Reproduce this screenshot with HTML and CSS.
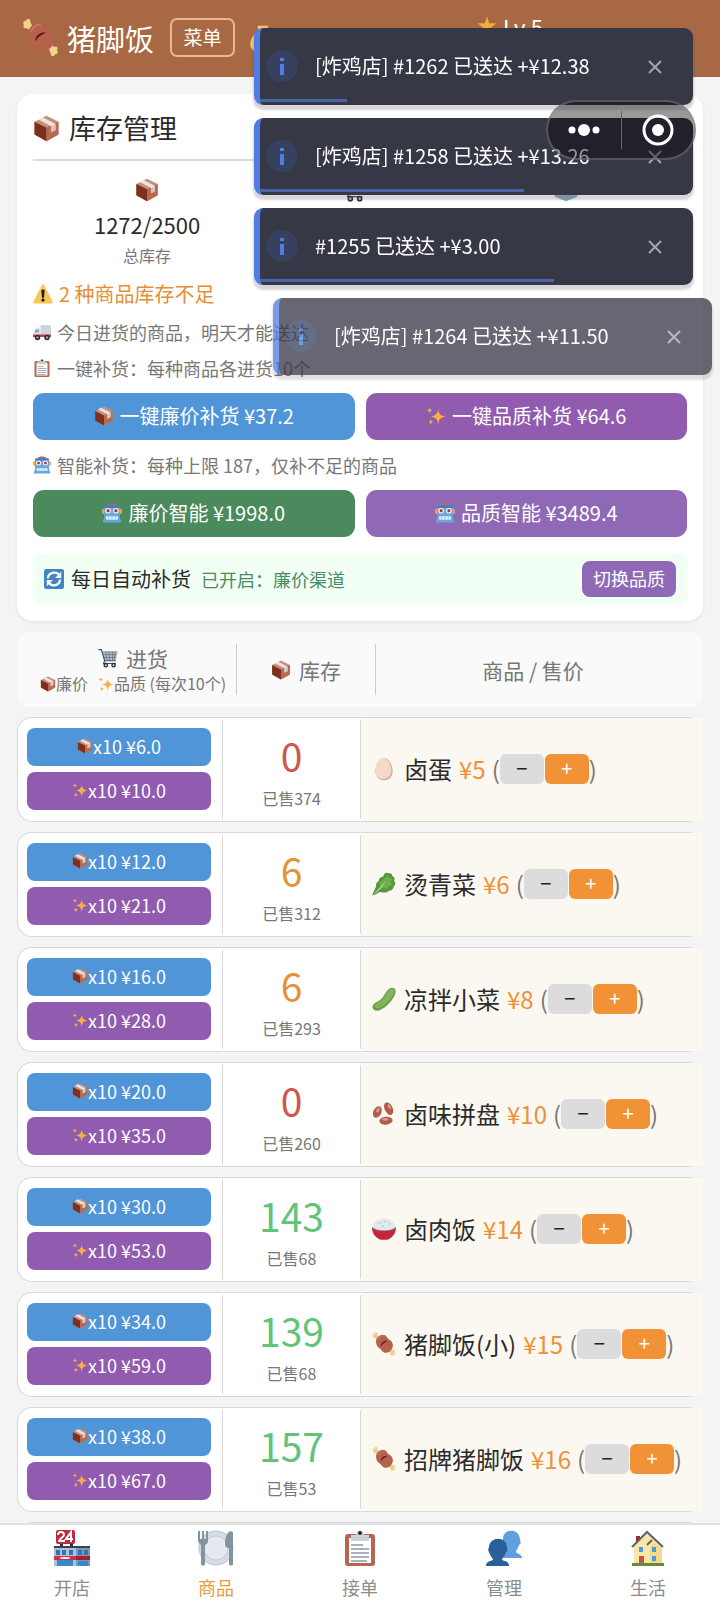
FILE: index.html
```html
<!DOCTYPE html>
<html lang="zh-CN">
<head>
    <meta charset="utf-8">
    <meta name="viewport" content="width=device-width, initial-scale=1">
    <title>猪脚饭</title>
    <link rel="stylesheet" href="styles.css">
</head>
<body>
    <!-- icon sprite -->
    <svg class="sprite" aria-hidden="true">
        <symbol id="meat" viewBox="0 0 36 36">
            <path d="M2 6c-2-2 0-5 2-4 0-3 4-3 4 0l1 3 4 5-4 3-4-4-2 0c-2 0-2-2-1-3z" fill="#f3d18b"/>
            <path d="M34 30c2 2 0 5-2 4 0 3-4 3-4 0l-1-3-4-5 4-3 4 4 2 0c2 0 2 2 1 3z" fill="#f3d18b"/>
            <path d="M6 14c0-5 4-9 10-10 4 0 6 2 7 5 1 2 4 2 6 5 3 4 3 8 1 11-2 4-6 7-11 6-4-1-4-4-7-6-4-2-6-6-6-11z" fill="#b5614c"/>
            <path d="M10 8c3-3 7-4 10-2-4 0-7 1-9 4-1 3-3 3-3 2z" fill="#c87964"/>
            <path d="M13 20c1-4 5-7 10-7-1 2-5 2-8 6-1 2-2 3-2 1z" fill="#5b120f"/>
        </symbol>
        <symbol id="box" viewBox="0 0 36 36">
            <path d="M18 1l16 8v17l-16 9L2 26V9z" fill="#c98f78"/>
            <path d="M2 9l16 8v18L2 26z" fill="#7e301f"/>
            <path d="M18 17l16-8v17l-16 9z" fill="#b9694f"/>
            <path d="M7 6l6-3 17 9v8l-6 3v-8z" fill="#e8e4e6"/>
            <path d="M24 15l6-3v8l-6 3z" fill="#cfc6c6"/>
        </symbol>
        <symbol id="sparkle" viewBox="0 0 36 36">
            <path d="M22 5c1 9 3 12 13 14-10 2-12 5-13 15-1-10-4-13-13-15 9-2 12-5 13-14z" fill="#fbb03c"/>
            <path d="M7 2c0 4 1 5 5 6-4 0-5 2-5 6-1-4-2-6-6-6 4-1 5-2 6-6zM9 23c0 4 1 5 5 6-4 0-5 2-5 6-1-4-2-6-5-6 3-1 4-2 5-6z" fill="#fbb03c"/>
        </symbol>
        <symbol id="cart" viewBox="0 0 36 36">
            <path d="M8 7h27l-3 15H12z" fill="#b4c4d2"/>
            <path d="M8 7h27M9 12h25M10 17h23M14 7l2 15M20 7l1 15M26 7v15M31 7l-2 15" stroke="#66757f" stroke-width="1.500" fill="none"/>
            <path d="M1 3h5l6 20h20M12 23l-2 5h22" stroke="#414a54" stroke-width="2" fill="none"/>
            <circle cx="14" cy="31" r="3" fill="#ddd" stroke="#292f33" stroke-width="2.500"/>
            <circle cx="28" cy="31" r="3" fill="#ddd" stroke="#292f33" stroke-width="2.500"/>
        </symbol>
        <symbol id="ice" viewBox="0 0 36 36">
            <path d="M18 1l17 8v19l-17 7-17-7V9z" fill="#8ba9ba"/>
            <path d="M1 9l17 8 17-8-17-8z" fill="#bddcea"/>
        </symbol>
        <symbol id="warn" viewBox="0 0 36 36">
            <path d="M16 2c1-2 3-2 4 0l15 29c1 2 0 4-2 4H3c-2 0-3-2-2-4z" fill="#f8ca55"/>
            <path d="M15 12c0-3 6-3 6 0l-1 11c0 3-4 3-4 0z" fill="#231f20"/>
            <circle cx="18" cy="29" r="3" fill="#231f20"/>
        </symbol>
        <symbol id="truck" viewBox="0 0 36 36">
            <path d="M15 7c0-2 1-3 3-3h15c2 0 3 1 3 3v19H15z" fill="#ced6dc"/>
            <path d="M1 19l4-8c1-1 2-2 4-2h6v17H1z" fill="#e8e8df"/>
            <path d="M5 13h7v6H3z" fill="#6faee0"/>
            <path d="M0 23h36v5H0z" fill="#d53546"/>
            <circle cx="9" cy="29" r="4" fill="#98a4ae" stroke="#292f33" stroke-width="3"/>
            <circle cx="28" cy="29" r="4" fill="#98a4ae" stroke="#292f33" stroke-width="3"/>
        </symbol>
        <symbol id="clipboard" viewBox="0 0 36 36">
            <rect x="3" y="4" width="30" height="32" rx="3" fill="#b96450"/>
            <path d="M7 8h22v25H7z" fill="#fff"/>
            <path d="M9 15h12M9 19h18M9 23h18M9 27h18M9 31h16" stroke="#8899a6" stroke-width="1.500"/>
            <path d="M9 5h5c0-6 8-6 8 0h5v6H9z" fill="#ccd2d6"/>
            <circle cx="18" cy="3" r="2" fill="#292f33"/>
        </symbol>
        <symbol id="robot" viewBox="0 0 36 36">
            <path d="M9 4c2-4 16-4 18 0z" fill="#e05a4c"/>
            <rect x="0" y="10" width="36" height="10" rx="4" fill="#f5a43f"/>
            <path d="M4 6c0-2 28-2 28 0v20l3 9H1l3-9z" fill="#67a7dc"/>
            <path d="M4 6c0-3 28-3 28 0v3H4z" fill="#3d82bf"/>
            <circle cx="11" cy="14" r="5" fill="#fff"/><circle cx="25" cy="14" r="5" fill="#fff"/>
            <circle cx="11" cy="14" r="3" fill="#b8304a"/><circle cx="25" cy="14" r="3" fill="#b8304a"/>
            <rect x="7" y="24" width="22" height="6" rx="2" fill="#e4edf5"/>
            <path d="M12 24v6M18 24v6M24 24v6" stroke="#67a7dc"/>
        </symbol>
        <symbol id="refresh" viewBox="0 0 36 36">
            <rect width="36" height="36" rx="4" fill="#4384c4"/>
            <path d="M7 17c1-11 15-14 21-5M29 19c-1 11-15 14-21 5" fill="none" stroke="#fff" stroke-width="4"/>
            <path d="M31 5v11H20zM5 31V20h11z" fill="#fff"/>
        </symbol>
        <symbol id="egg" viewBox="0 0 36 36">
            <path d="M18 1c7 0 13 12 13 20 0 9-6 14-13 14S5 30 5 21C5 13 11 1 18 1z" fill="#dba995"/>
            <path d="M17 1c6 0 12 11 12 19 0 8-5 13-12 13S5 29 5 20C5 12 11 1 17 1z" fill="#f4d9cb"/>
        </symbol>
        <symbol id="leaf" viewBox="0 0 36 36">
            <path d="M1 35c-1-3 4-8 5-14 0-4 1-6 4-7 0-5 4-7 7-7 0-5 5-7 8-5 3-1 6 1 5 4 4 1 5 4 3 7 3 3 2 7-1 9 0 5-4 6-7 6-3 4-8 3-12 2-4 0-8 5-12 5z" fill="#57963b"/>
            <path d="M12 16c2-1 4-6 8-7l4-4 2 4 5 2-3 4 3 4-6 2-2 4-6-1-5 2z" fill="#6fae4a"/>
            <path d="M2 34c6-7 10-12 20-21-7 9-11 15-20 21z" fill="#b4d88a"/>
        </symbol>
        <symbol id="cucumber" viewBox="0 0 36 36">
            <path d="M24 4c4-4 9-4 11 0 2 6-5 17-13 24C15 34 7 38 3 34c-5-5-1-9 5-12C17 18 19 9 24 4z" fill="#6a9d49"/>
            <path d="M25 5c3-3 7-3 8 0 2 5-6 15-13 21-5 4-12 8-15 5-3-3 0-5 5-8C19 19 20 10 25 5z" fill="#83b45c"/>
        </symbol>
        <symbol id="beans" viewBox="0 0 36 36">
            <g fill="#b25b49">
                <ellipse cx="8" cy="15" rx="6" ry="9" transform="rotate(25 8 15)"/>
                <ellipse cx="25" cy="10" rx="6" ry="10" transform="rotate(-25 25 10)"/>
                <ellipse cx="21" cy="28" rx="10" ry="6" transform="rotate(-5 21 28)"/>
            </g>
            <g fill="#dd9a88">
                <ellipse cx="9" cy="12" rx="2" ry="4" transform="rotate(30 9 12)"/>
                <ellipse cx="26" cy="7" rx="2" ry="4" transform="rotate(-25 26 7)"/>
                <ellipse cx="20" cy="26" rx="5" ry="2"/>
            </g>
        </symbol>
        <symbol id="rice" viewBox="0 0 36 36">
            <path d="M0 16h36c0 7-4 13-9 16-1 3-17 3-18 0C4 29 0 23 0 16z" fill="#c3263e"/>
            <ellipse cx="18" cy="16" rx="17" ry="5" fill="#8a8f96"/>
            <path d="M1 14C4 5 12 3 18 2c8 0 14 5 17 12-1 8-33 8-34 0z" fill="#e3e8eb"/>
            <path d="M10 9l3 1M18 6l3 2M25 11l3-1M15 14l3-1" stroke="#c2ccd2" stroke-width="2"/>
        </symbol>
        <symbol id="store" viewBox="0 0 36 36">
            <path d="M6 12h3v6H6zM16 12h3v6h-3z" fill="#292f33"/>
            <rect x="2" y="0" width="19" height="14" rx="2" fill="#c0283c"/>
            <path d="M4 5c0-4 6-4 6 0 0 2-5 4-5 6h6M17 12V2l-5 7h7" fill="none" stroke="#fff" stroke-width="2"/>
            <path d="M0 17h22v19H0z" fill="#a9c3dd"/>
            <path d="M22 17h14v19H22z" fill="#8196ad"/>
            <path d="M0 16h36v2H0z" fill="#39424e"/>
            <path d="M2 20h4v5H2zM8 20h4v5H8zM15 20h4v5h-4zM24 20h4v5h-4zM30 20h4v5h-4z" fill="#3273b5"/>
            <path d="M0 26h22v4H0z" fill="#d22f43"/><path d="M22 26h14v4H22z" fill="#a02035"/>
            <path d="M3 30h16v6H3zM24 31h10v5H24z" fill="#3b88c8"/>
            <ellipse cx="11" cy="28" rx="5" ry="1" fill="#fff"/>
        </symbol>
        <symbol id="plate" viewBox="0 0 36 36">
            <circle cx="18" cy="18" r="17" fill="#d5dce4" stroke="#bcc6d0"/>
            <circle cx="18" cy="18" r="12" fill="#e5eaf0" stroke="#c3ccd6"/>
            <path d="M0 1v9c0 3 2 4 3 5v19c0 2 4 2 4 0V15c2-1 3-2 3-5V1H8v8H6V1H4v8H2V1z" fill="#8293a2"/>
            <path d="M35 2c-4-3-8 3-8 11 0 3 1 5 4 5v16c0 2 4 2 4 0z" fill="#8293a2"/>
        </symbol>
        <symbol id="people" viewBox="0 0 36 36">
            <path d="M17 8c1-10 17-10 17 2 1 2 1 4-1 5-1 4-3 5-3 7 1 2 6 2 6 6H16z" fill="#5f9fe2"/>
            <path d="M3 17c1-11 18-11 18 1 1 2 0 4-1 4-1 4-4 6-4 8 2 1 7 1 7 6H0c0-5 5-5 7-6 0-2-3-4-4-8-1-1-1-3 0-5z" fill="#2a6099"/>
        </symbol>
        <symbol id="house" viewBox="0 0 36 36">
            <path d="M6 6h4v11H6z" fill="#9b2335"/>
            <path d="M4 16L17 3l15 13v17H4z" fill="#fbe5a9"/>
            <path d="M20 17l4-4 8 5v15H20z" fill="#f4d98a"/>
            <path d="M2 17L17 2l16 15M17 15l5-5" fill="none" stroke="#5f6467" stroke-width="2"/>
            <path d="M9 17h4v5H9zM22 17h4v5h-4zM22 26h4v5h-4z" fill="#4e9bdc"/>
            <path d="M9 26h5v8H9z" fill="#b75c48"/>
            <path d="M2 33h32v3H2z" fill="#638b39"/>
        </symbol>
        <symbol id="star" viewBox="0 0 36 36">
            <path d="M18 1l4 12h13l-10 8 4 13-11-8-11 8 4-13L1 13h13z" fill="#f2ab3d"/>
        </symbol>
        <symbol id="money" viewBox="0 0 36 36">
            <path d="M12 1h15l-4 8c10 6 14 25 4 27H9C-3 33 1 15 13 9z" fill="#f3c66e"/>
        </symbol>
    </svg>

    <header class="topbar">
        <svg class="logo"><use href="#meat"/></svg>
        <h1>猪脚饭</h1>
        <button class="menu-btn">菜单</button>
        <svg class="money"><use href="#money"/></svg>
        <div class="level"><svg class="icon"><use href="#star"/></svg>Lv.5</div>
    </header>

    <main>
        <section class="card">
            <h2><svg class="icon"><use href="#box"/></svg>库存管理</h2>
            <div class="stats">
                <div class="stat">
                    <svg class="icon"><use href="#box"/></svg>
                    <b>1272/2500</b>
                    <span>总库存</span>
                </div>
                <div class="stat stat-narrow"><svg class="icon"><use href="#cart"/></svg></div>
                <div class="stat stat-wide"><svg class="icon"><use href="#ice"/></svg></div>
            </div>
            <p class="low"><svg class="icon"><use href="#warn"/></svg>2 种商品库存不足</p>
            <p class="tip"><svg class="icon"><use href="#truck"/></svg>今日进货的商品，明天才能送达</p>
            <p class="tip"><svg class="icon"><use href="#clipboard"/></svg>一键补货：每种商品各进货10个</p>
            <div class="btn-row">
                <button class="btn blue"><svg class="icon"><use href="#box"/></svg>一键廉价补货 ¥37.2</button>
                <button class="btn purple"><svg class="icon"><use href="#sparkle"/></svg>一键品质补货 ¥64.6</button>
            </div>
            <p class="tip tip-smart"><svg class="icon"><use href="#robot"/></svg>智能补货：每种上限 187，仅补不足的商品</p>
            <div class="btn-row">
                <button class="btn green"><svg class="icon"><use href="#robot"/></svg>廉价智能 ¥1998.0</button>
                <button class="btn violet"><svg class="icon"><use href="#robot"/></svg>品质智能 ¥3489.4</button>
            </div>
            <div class="auto">
                <svg class="icon"><use href="#refresh"/></svg>
                <span class="auto-name">每日自动补货</span>
                <span class="auto-state">已开启：廉价渠道</span>
                <button class="switch-btn">切换品质</button>
            </div>
        </section>

        <table class="goods">
            <thead>
                <tr>
                    <th>
                        <div class="th-main"><svg class="icon"><use href="#cart"/></svg>进货</div>
                        <div class="th-sub"><svg class="icon"><use href="#box"/></svg>廉价 <svg class="icon second"><use href="#sparkle"/></svg>品质 (每次10个)</div>
                    </th>
                    <th><div class="th-main"><svg class="icon"><use href="#box"/></svg>库存</div></th>
                    <th><div class="th-main">商品 / 售价</div></th>
                </tr>
            </thead>
            <tbody id="goods"></tbody>
        </table>
    </main>

    <nav class="tabs">
        <a href="#shop"><svg><use href="#store"/></svg>开店</a>
        <a href="#goods" class="active"><svg><use href="#plate"/></svg>商品</a>
        <a href="#orders"><svg><use href="#clipboard"/></svg>接单</a>
        <a href="#manage"><svg><use href="#people"/></svg>管理</a>
        <a href="#life"><svg><use href="#house"/></svg>生活</a>
    </nav>

    <div class="toasts" id="toasts"></div>

    <!-- mini program capsule -->
    <div class="capsule">
        <button aria-label="更多"><svg viewBox="0 0 36 36"><circle cx="6" cy="18" r="3.500"/><circle cx="18" cy="18" r="6"/><circle cx="30" cy="18" r="3.500"/></svg></button>
        <button aria-label="关闭"><svg viewBox="0 0 36 36"><circle cx="18" cy="18" r="14" fill="none" stroke="#fff" stroke-width="3"/><circle cx="18" cy="18" r="6"/></svg></button>
    </div>

    <script>
        const goods = [
            { icon: 'egg', name: '卤蛋', price: 5, cheap: '6.0', fine: '10.0', stock: 0, sold: 374 },
            { icon: 'leaf', name: '烫青菜', price: 6, cheap: '12.0', fine: '21.0', stock: 6, sold: 312 },
            { icon: 'cucumber', name: '凉拌小菜', price: 8, cheap: '16.0', fine: '28.0', stock: 6, sold: 293 },
            { icon: 'beans', name: '卤味拼盘', price: 10, cheap: '20.0', fine: '35.0', stock: 0, sold: 260 },
            { icon: 'rice', name: '卤肉饭', price: 14, cheap: '30.0', fine: '53.0', stock: 143, sold: 68 },
            { icon: 'meat', name: '猪脚饭(小)', price: 15, cheap: '34.0', fine: '59.0', stock: 139, sold: 68 },
            { icon: 'meat', name: '招牌猪脚饭', price: 16, cheap: '38.0', fine: '67.0', stock: 157, sold: 53 }
        ];
        const toasts = [
            { text: '[炸鸡店] #1262 已送达 +¥12.38', left: 20 },
            { text: '[炸鸡店] #1258 已送达 +¥13.26', left: 61 },
            { text: '#1255 已送达 +¥3.00', left: 68 },
            { text: '[炸鸡店] #1264 已送达 +¥11.50', left: 0, entering: true }
        ];

        function icon(id) {
            return `<svg class="icon"><use href="#${id}"/></svg>`;
        }

        function level(stock) {
            if (stock === 0) return 'empty';
            return stock < 10 ? 'few' : 'enough';
        }

        document.querySelector('#goods').innerHTML = goods.map(g => `
            <tr>
                <td class="buy">
                    <button class="blue">${icon('box')}x10 ¥${g.cheap}</button>
                    <button class="purple">${icon('sparkle')}x10 ¥${g.fine}</button>
                </td>
                <td class="stock"><b class="${level(g.stock)}">${g.stock}</b><span>已售${g.sold}</span></td>
                <td class="item">${icon(g.icon)}<span class="name">${g.name}</span><span class="price">¥${g.price}</span><span class="paren">(</span><button class="minus" aria-label="降价">−</button><button class="plus" aria-label="涨价">+</button><span class="paren">)</span></td>
            </tr>`).join('') + '<tr class="next-row"><td></td><td></td><td></td></tr>';

        document.querySelector('#toasts').innerHTML = toasts.map(t => `
            <div class="toast${t.entering ? ' entering' : ''}">
                <svg class="info" viewBox="0 0 32 32"><circle cx="16" cy="16" r="16"/><path d="M16 14v11M16 8v3"/></svg>
                <span>${t.text}</span>
                <button aria-label="关闭"><svg viewBox="0 0 14 14"><path d="M1 1l12 12M13 1L1 13"/></svg></button>
                <div class="progress" style="width: ${t.left}%"></div>
            </div>`).join('');
    </script>
</body>
</html>
```
FILE: styles.css
```css
* {
    box-sizing: border-box;
}
body {
    margin: 0;
    height: 100vh;
    display: flex;
    flex-direction: column;
    overflow: hidden;
    background: #f4f4f4;
    color: #2b2b2b;
    font-family: "Noto Sans CJK SC", sans-serif;
    font-weight: 400;
    font-size: 20px;
    line-height: 24px;
}
button {
    border: none;
    padding: 0 0 2px;
    font: inherit;
    color: #fff;
    cursor: pointer;
}
h1, h2, p {
    margin: 0;
    font-weight: inherit;
}
b, th {
    font-weight: inherit;
}
.sprite {
    position: absolute;
    width: 0;
    height: 0;
}
.icon {
    width: 20px;
    height: 20px;
    flex: none;
}
.blue { background: #5095d7; }
.purple { background: #915bb0; }
.green { background: #4a8a5c; }
.violet { background: #8f69b6; }

/* header */
.topbar {
    flex: none;
    display: flex;
    align-items: center;
    height: 77px;
    padding: 0 177px 2px 22px;
    background: #a76843;
    color: #fff;
}
.logo {
    width: 37px;
    height: 37px;
    margin-right: 8px;
}
h1 {
    font-size: 29px;
    line-height: 36px;
}
.menu-btn {
    width: 65px;
    height: 39px;
    margin: 0 14px 0 16px;
    border: 2px solid #ecb694;
    border-radius: 7px;
    background: none;
    font-size: 19px;
}
.money {
    width: 26px;
    height: 30px;
}
.level {
    display: flex;
    align-items: center;
    gap: 6px;
    align-self: flex-start;
    margin: 14px 0 0 auto;
    font-size: 22px;
}

/* stock card */
main {
    flex: 1;
    min-height: 0;
    overflow: hidden;
    padding: 17px 17px 0;
}
.card {
    padding: 16px;
    border-radius: 16px;
    background: #fff;
    box-shadow: 0 2px 4px rgba(0, 0, 0, 0.06);
}
h2 {
    display: flex;
    align-items: center;
    gap: 9px;
    padding-bottom: 13px;
    border-bottom: 2px solid #ddd;
    font-size: 27px;
    line-height: 36px;
}
h2 .icon {
    width: 27px;
    height: 27px;
}
.stats {
    display: flex;
    justify-content: space-around;
    padding: 17px 0 7px;
}
.stat {
    display: flex;
    flex-direction: column;
    align-items: center;
}
.stat .icon {
    width: 24px;
    height: 24px;
}
.stat b {
    margin: 10px 0 7px;
    font-size: 22px;
}
.stat span {
    color: #777;
    font-size: 16px;
}
.stat-narrow { width: 62px; }
.stat-wide { width: 120px; }
.low, .tip {
    display: flex;
    align-items: center;
    gap: 6px;
}
.low {
    height: 40px;
    color: #e48f33;
}
.tip {
    height: 36px;
    color: #777;
    font-size: 18px;
}
.tip .icon {
    width: 18px;
    height: 18px;
}
.tip-smart {
    height: 50px;
}
.btn-row {
    display: grid;
    grid-template-columns: 1fr 1fr;
    gap: 11px;
}
.tip + .btn-row {
    margin-top: 7px;
}
.tip-smart + .btn-row {
    margin-top: 0;
}
.btn {
    display: flex;
    align-items: center;
    justify-content: center;
    gap: 6px;
    height: 47px;
    border-radius: 11px;
}
.auto {
    display: flex;
    align-items: center;
    margin-top: 16px;
    padding: 8px 11px;
    border-radius: 9px;
    background: #f1fff4;
}
.auto-name {
    margin: 0 10px 0 7px;
}
.auto-state {
    color: #4b8c5e;
    font-size: 18px;
}
.switch-btn {
    width: 94px;
    height: 36px;
    margin-left: auto;
    border-radius: 8px;
    background: #8f69b6;
    font-size: 18px;
}

/* goods list */
.goods, .goods thead, .goods tbody {
    display: block;
}
.goods tr {
    display: grid;
    grid-template-columns: 204px 139px 1fr;
}
.goods th, .goods td {
    padding: 0;
}
.goods thead tr {
    grid-template-columns: 206px 139px 1fr;
    height: 75px;
    margin: 11px 0 10px;
    padding: 12px 13px;
    border-radius: 13px;
    background: #fafafa;
    color: #777;
}
.goods th {
    display: flex;
    flex-direction: column;
    justify-content: center;
    white-space: nowrap;
}
.goods th + th {
    border-left: 1px solid #ccc;
}
.th-main, .th-sub {
    display: flex;
    align-items: center;
    justify-content: center;
    font-size: 21px;
    line-height: 28px;
}
.th-main .icon {
    margin-right: 8px;
}
.th-sub {
    font-size: 16px;
    line-height: 23px;
}
.th-sub .icon {
    width: 16px;
    height: 16px;
}
.th-sub .second {
    margin-left: 10px;
}
.goods tbody tr {
    height: 105px;
    margin-bottom: 10px;
    border: 1px solid #d8d8da;
    border-right: none;
    border-radius: 15px;
    background: #fff;
}
.goods .buy {
    display: flex;
    flex-direction: column;
    gap: 6px;
    padding: 10px 11px 10px 9px;
}
.buy button {
    display: flex;
    align-items: center;
    justify-content: center;
    height: 38px;
    border-radius: 8px;
    font-size: 18px;
}
.buy .icon {
    width: 16px;
    height: 16px;
}
.stock {
    display: flex;
    flex-direction: column;
    align-items: center;
    margin: 2px 0;
    border: 1px solid #d8d8da;
    border-width: 0 1px;
}
.stock b {
    margin: 16px 0 13px;
    font-size: 39px;
    line-height: 39px;
}
.stock span {
    color: #777;
    font-size: 16px;
    line-height: 20px;
}
.stock .empty { color: #cd584e; }
.stock .few { color: #e29339; }
.stock .enough { color: #62c37b; }
.goods .item {
    display: flex;
    align-items: center;
    padding: 0 0 2px 11px;
    background: #faf8f1;
    font-size: 24px;
    line-height: 30px;
    white-space: nowrap;
}
.item .icon {
    width: 24px;
    height: 24px;
}
.name {
    margin: 0 7px 0 8px;
}
.price {
    margin-right: 6px;
    color: #ee9138;
}
.paren {
    color: #777;
}
.item button {
    width: 44px;
    height: 30px;
    border-radius: 6px;
    font-size: 20px;
    line-height: 28px;
}
.item .minus {
    margin-right: 1px;
    background: #dcdcdc;
    color: #222;
}
.item .plus {
    background: #f09235;
}

/* bottom tabs */
.tabs {
    flex: none;
    display: flex;
    height: 77px;
    border-top: 2px solid #e2e2e2;
    background: #fff;
}
.tabs a {
    flex: 1;
    display: flex;
    flex-direction: column;
    align-items: center;
    gap: 9px;
    padding-top: 5px;
    color: #8c8c8c;
    font-size: 18px;
    text-decoration: none;
}
.tabs svg {
    width: 36px;
    height: 36px;
}
.tabs .active {
    color: #e59a3c;
}

/* toasts */
.toasts {
    position: fixed;
    top: 28px;
    right: 27px;
    width: 439px;
    display: flex;
    flex-direction: column;
    gap: 13px;
}
.toast {
    position: relative;
    display: flex;
    align-items: center;
    height: 77px;
    padding: 0 30px 2px 6px;
    border-left: 6px solid #4f7de4;
    border-radius: 9px;
    background: #363846;
    box-shadow: 0 4px 2px 1px rgba(80, 70, 85, 0.22);
    color: #fff;
}
.toast.entering {
    left: 19px;
    opacity: 0.76;
}
.info {
    width: 32px;
    height: 32px;
    margin-right: 17px;
    fill: #35415f;
    stroke: #4f7de4;
    stroke-width: 4px;
}
.info circle {
    stroke: none;
}
.toast button {
    margin-left: auto;
    width: 16px;
    height: 24px;
    background: none;
}
.toast button svg {
    width: 14px;
    height: 14px;
    stroke: #a4a5ac;
    stroke-width: 2px;
}
.progress {
    position: absolute;
    left: 0;
    bottom: 3px;
    height: 3px;
    background: #4a64a4;
}

/* capsule */
.capsule {
    position: fixed;
    top: 100px;
    right: 24px;
    width: 150px;
    height: 60px;
    display: flex;
    align-items: center;
    border: 2px solid rgba(140, 140, 140, 0.5);
    border-radius: 30px;
    background: rgba(0, 0, 0, 0.4);
}
.capsule button {
    flex: 1;
    height: 38px;
    padding: 0;
    background: none;
}
.capsule button + button {
    border-left: 1px solid #666;
}
.capsule svg {
    display: block;
    width: 36px;
    height: 36px;
    margin: 0 auto;
    fill: #fff;
}
```
